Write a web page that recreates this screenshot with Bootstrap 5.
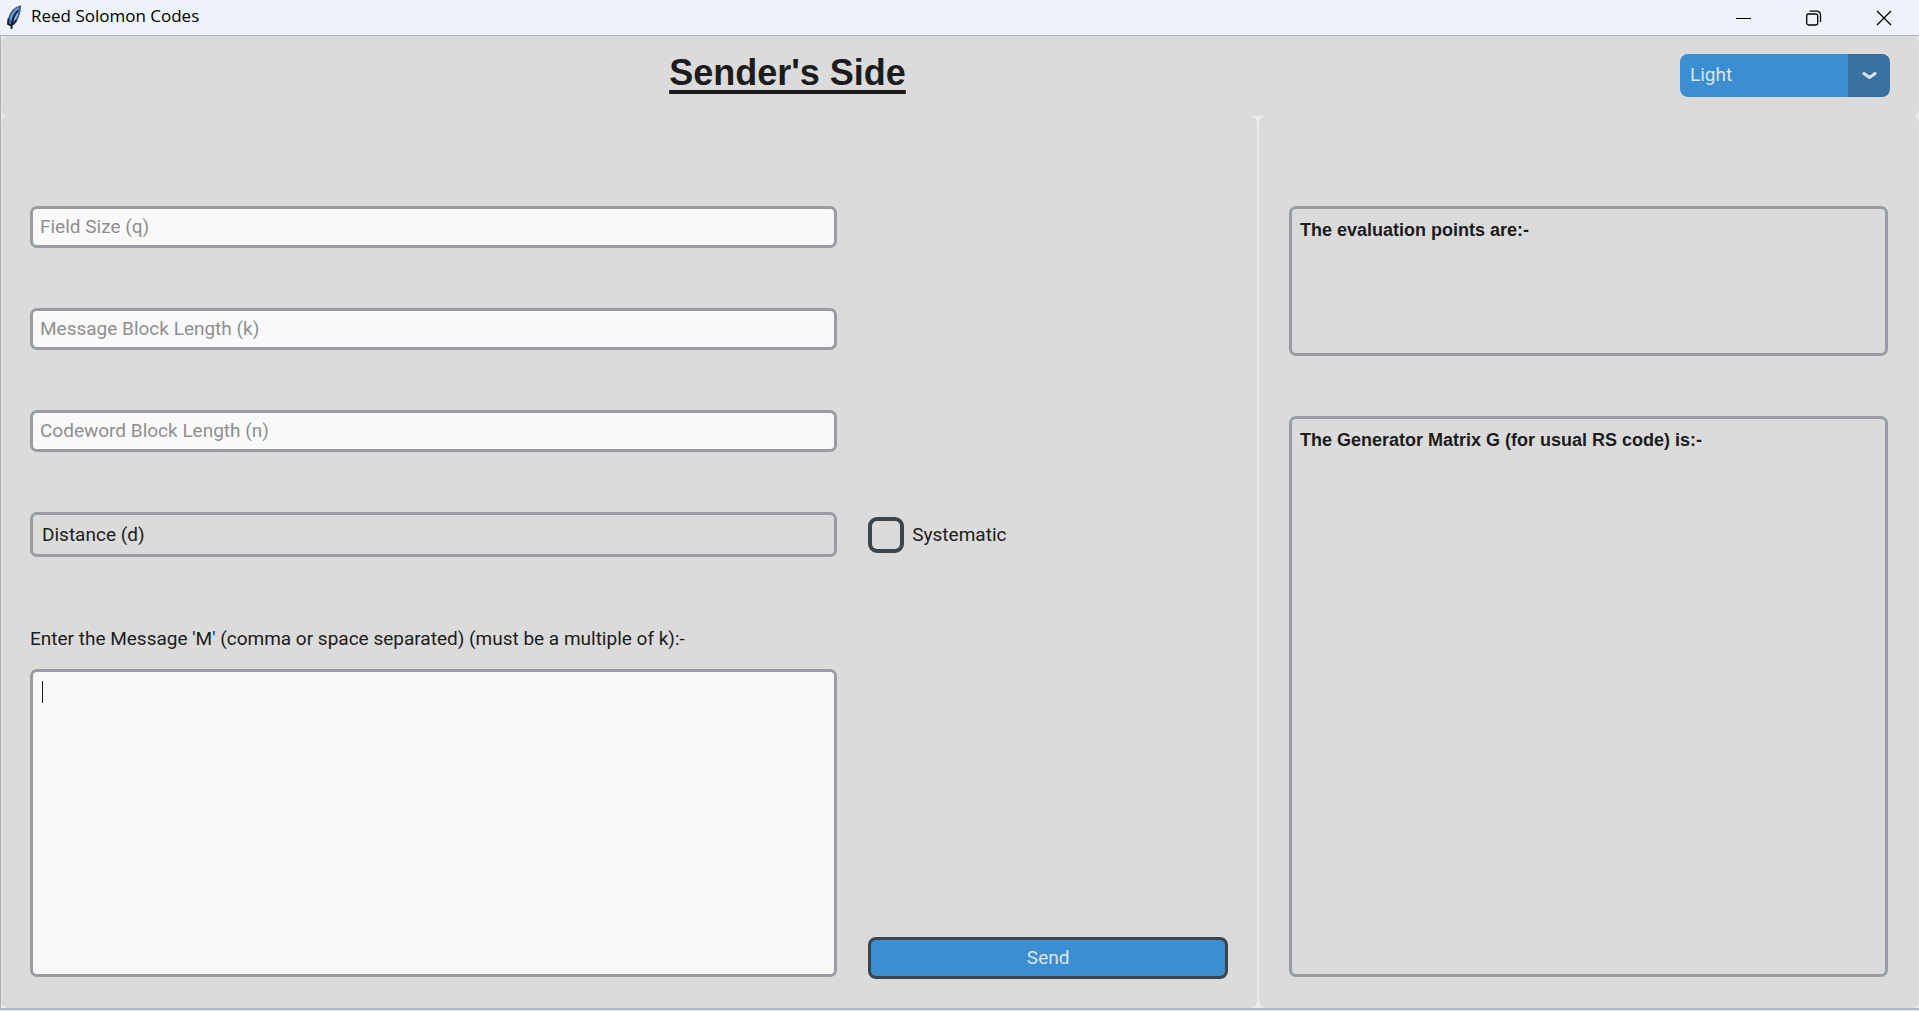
<!DOCTYPE html>
<html lang="en" data-bs-theme="light">
<head>
<meta charset="utf-8">
<meta name="viewport" content="width=device-width, initial-scale=1">
<title>Reed Solomon Codes</title>
<link href="https://cdn.jsdelivr.net/npm/bootstrap@5.3.0/dist/css/bootstrap.min.css" rel="stylesheet">
<style>
  :root { --panel: #dbdbdb; --gap-bg: #ebebeb; --line: #979da2; --ink: #1c1c1c; --blue: #3b8ed0; --blue-dark: #36719f; --dark-line: #3e454a; }
  body { font-family: Roboto, "Liberation Sans", sans-serif; font-size: 19px; line-height: 24px; color: var(--ink); background: var(--gap-bg); }
  .window { border-bottom: 2px solid #b0b7c3; }
  .titlebar { height: 36px; background: #eef3fa; border-bottom: 1px solid #b0b1b3; color: #000; font-family: "Open Sans", "Noto Sans", sans-serif; font-size: 17px; }
  .app-icon { margin-left: 5px; margin-right: 6px; }
  .win-btn { width: 70px; height: 32px; color: #000; }
  .workspace { border-left: 1px solid #b0b1b3; }
  .panel { background: var(--panel); border-radius: 7px; }
  .topbar { height: 80px; padding-right: 29px; padding-bottom: 2px; }
  .topbar h1 { font: bold 36px/42px "Liberation Sans", sans-serif; text-decoration: underline; text-decoration-thickness: 4px; text-underline-offset: 5px; text-decoration-skip-ink: none; padding-bottom: 4px; }
  .mode-pick { width: 210px; margin-left: 106px; }
  .mode-pick select { height: 43px; padding: 0 52px 0 10px; border: 0; border-radius: 8px; color: #dce4ee; background: linear-gradient(to left, var(--blue-dark) 42px, var(--blue) 42px); appearance: none; }
  .mode-pick svg { position: absolute; right: 13px; top: 17px; pointer-events: none; }
  .panes { display: grid; grid-template-columns: minmax(0, 1256fr) minmax(0, 660fr); gap: 2px; }
  .pane-pad { padding: 90px 29px 31px; }
  .sender { display: grid; grid-template-columns: minmax(0, 808fr) minmax(0, 360fr); column-gap: 31px; grid-template-rows: 42px 42px 42px 45px 1fr; row-gap: 60px; }
  .field { border: 3px solid var(--line); border-radius: 7px; background: #f9f9fa; color: var(--ink); padding: 0 7px; font-size: 19px; line-height: 24px; }
  input.field { height: 42px; padding-bottom: 2px; }
  .field::placeholder { color: #8f8f8f; opacity: 1; }
  .readout { display: block; background: var(--panel); }
  .distance { padding: 8px 9px; line-height: 24px; }
  .tick.form-check-input { width: 36px; height: 36px; border: 4px solid var(--dark-line); border-radius: 9px; background-color: transparent; }
  .message { margin-top: 10px; }
  .message label { margin-bottom: 18px; }
  .message .form-control { min-height: 200px; padding: 8px 9px; resize: none; }
  .caret-line { left: 12px; top: 12px; width: 1px; height: 22px; background: var(--ink); }
  .send { height: 42px; margin-bottom: -2px; padding: 0; border: 3px solid var(--dark-line); border-radius: 8px; background: var(--blue); color: #dce4ee; font-size: 19px; line-height: 24px; }
  .results { row-gap: 60px; padding-left: 30px; padding-right: 31px; }
  .result { padding: 9px 8px; font: bold 18px/24px "Liberation Sans", sans-serif; }
  .points { height: 150px; }
  .below { height: 1px; background: #dbe6f2; }
</style>
<script src="https://cdn.jsdelivr.net/npm/bootstrap@5.3.0/dist/js/bootstrap.bundle.min.js"></script>
</head>
<body>
<div class="d-flex flex-column min-vh-100">
  <div class="window d-flex flex-column flex-grow-1">
    <header class="titlebar d-flex align-items-center">
      <svg class="app-icon" width="20" height="26" viewBox="0 0 20 26" aria-hidden="true">
        <path d="M15.500 1C10 2 5.500 7 3.500 14l-.500 5 3 1.500c5-2 9-9 9.500-19.500z" fill="#3b78c4" stroke="#4a5663" stroke-width="1.200"/>
        <path d="M3.500 13.500l-.500 5.500 3 1.500c2-1 4-3 5.500-5.500" fill="none" stroke="#16202e" stroke-width="1.800"/>
        <path d="M13 5C9 9 6.500 14 6.500 24" fill="none" stroke="#16202e" stroke-width="1.800"/>
        <path d="M13 3.500C9.500 6 7 10 5.500 15" fill="none" stroke="#76aae8" stroke-width="1.500"/>
        <path d="M12.500 9l-3 6" stroke="#9cc7f4" stroke-width="1.200"/>
      </svg>
      <span class="me-auto pb-1">Reed Solomon Codes</span>
      <button class="win-btn btn p-0 border-0 align-self-start" aria-label="Minimize"><svg width="16" height="16" viewBox="0 0 16 16"><path d="M0 8.500h15" stroke="currentColor"/></svg></button>
      <button class="win-btn btn p-0 border-0 align-self-start" aria-label="Restore"><svg width="16" height="16" viewBox="0 0 16 16" fill="none" stroke="currentColor" stroke-width="1.300"><rect x="0.700" y="4" width="11" height="11" rx="2"/><path d="M3.500 1.200h7.500a3.500 3.500 0 0 1 3.500 3.500V12"/></svg></button>
      <button class="win-btn btn p-0 border-0 align-self-start" aria-label="Close"><svg width="16" height="16" viewBox="0 0 16 16"><path d="M1 1l14 14M15 1L1 15" stroke="currentColor" stroke-width="1.300"/></svg></button>
    </header>

    <div class="workspace d-flex flex-column flex-grow-1">
      <div class="topbar panel d-flex align-items-center">
        <h1 class="flex-grow-1 text-center m-0">Sender's Side</h1>
        <div class="mode-pick position-relative">
          <select class="w-100 d-block" aria-label="Appearance mode">
            <option selected>Light</option>
            <option>Dark</option>
            <option>System</option>
          </select>
          <svg width="15" height="10" viewBox="0 0 15 10" aria-hidden="true"><path d="M2 2.500l5.500 4 5.500-4" fill="none" stroke="#dce4ee" stroke-width="3" stroke-linecap="round" stroke-linejoin="round"/></svg>
        </div>
      </div>

      <main class="panes flex-grow-1">
        <form class="sender panel pane-pad" onsubmit="return false">
          <input class="field w-100" type="text" placeholder="Field Size (q)" aria-label="Field Size (q)">
          <span></span>
          <input class="field w-100" type="text" placeholder="Message Block Length (k)" aria-label="Message Block Length (k)">
          <span></span>
          <input class="field w-100" type="text" placeholder="Codeword Block Length (n)" aria-label="Codeword Block Length (n)">
          <span></span>
          <output class="field readout distance">Distance (d)</output>
          <div class="d-flex align-items-center">
            <input class="tick form-check-input m-0" type="checkbox" id="systematic">
            <label class="ps-2" for="systematic">Systematic</label>
          </div>
          <div class="message d-flex flex-column">
            <label for="message">Enter the Message 'M' (comma or space separated) (must be a multiple of k):-</label>
            <div class="position-relative d-flex flex-grow-1">
              <textarea class="field form-control shadow-none" id="message"></textarea>
              <span class="caret-line position-absolute"></span>
            </div>
          </div>
          <div class="d-flex align-items-end">
            <button class="send w-100" type="submit">Send</button>
          </div>
        </form>

        <section class="results panel pane-pad d-flex flex-column">
          <output class="field readout result points">The evaluation points are:-</output>
          <output class="field readout result flex-grow-1">The Generator Matrix G (for usual RS code) is:-</output>
        </section>
      </main>
    </div>
  </div>
  <div class="below"></div>
</div>
</body>
</html>
